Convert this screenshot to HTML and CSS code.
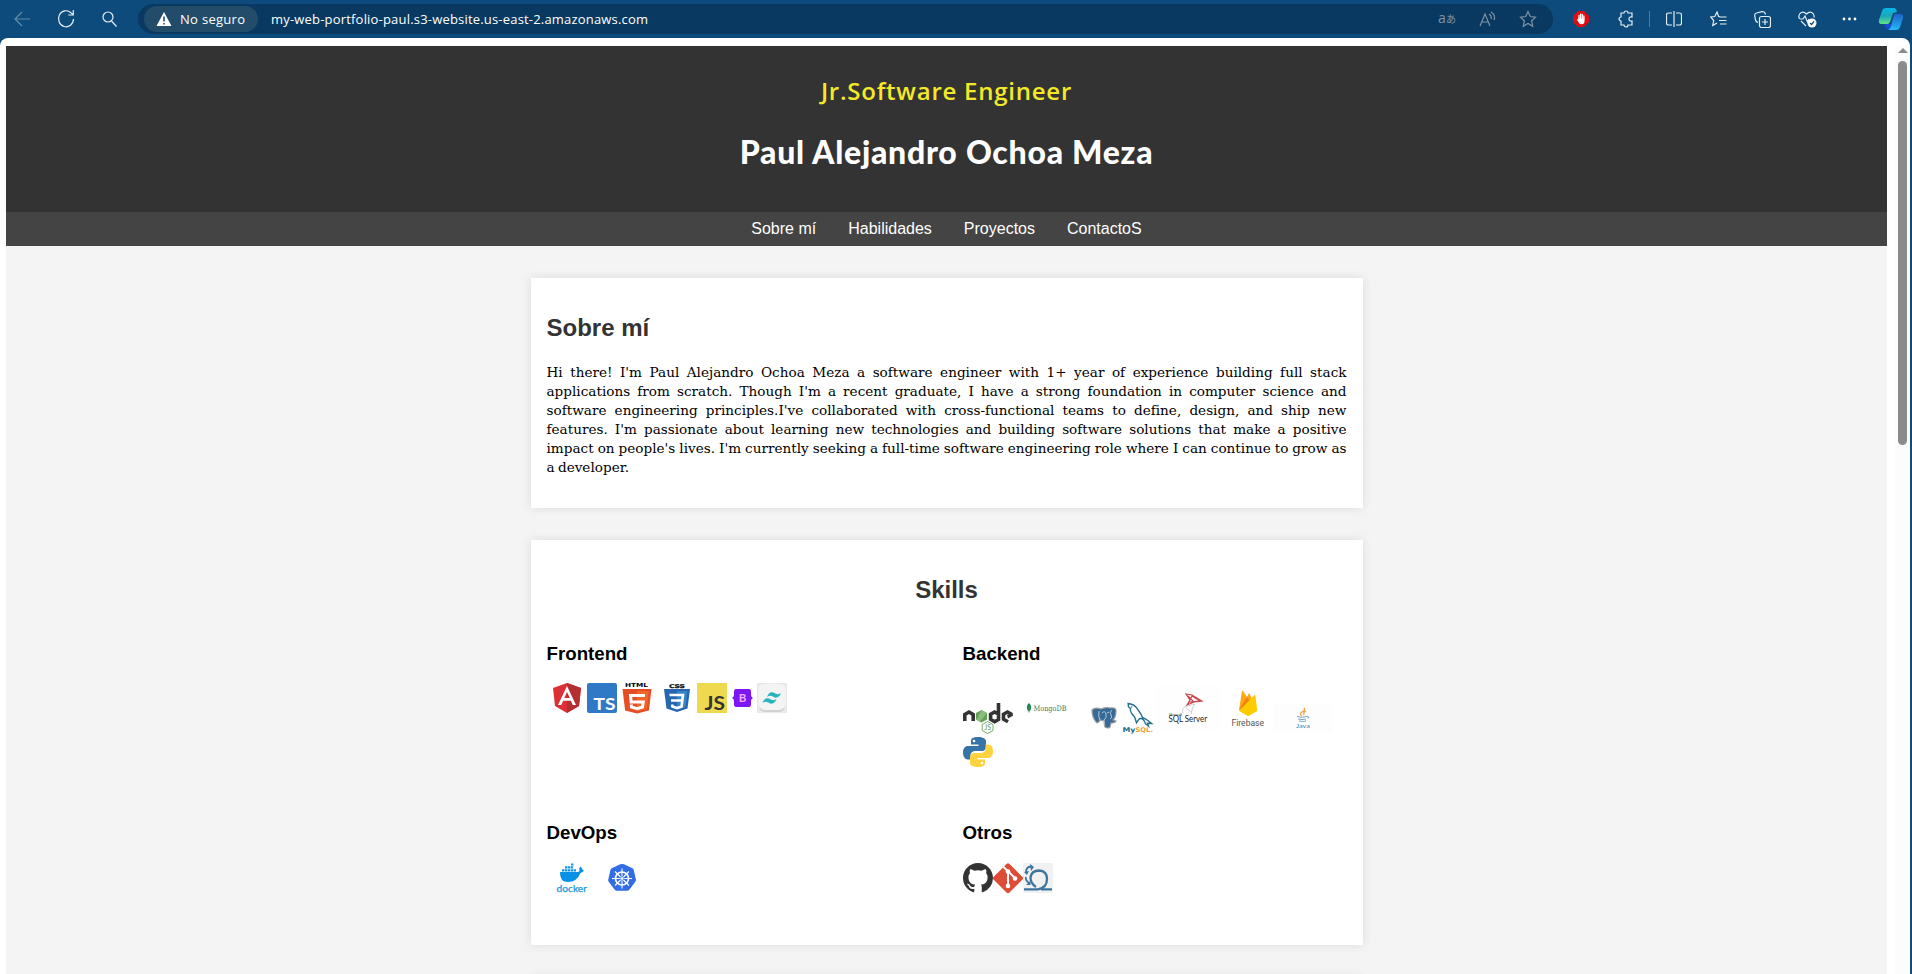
FILE: index.html
```html
<!DOCTYPE html>
<html lang="es">
<head>
<meta charset="utf-8">
<title>Paul Alejandro Ochoa Meza</title>
<link rel="stylesheet" href="styles.css">
</head>
<body>
<div class="toolbar">
  <div class="tools-left">
    <svg class="dim" width="18" height="18" viewBox="0 0 18 18"><path d="M17 9H2M9 2L2 9l7 7"/></svg>
    <svg width="18" height="20" viewBox="0 0 18 20"><path d="M16.500 10a7.500 8 0 1 1-2.600-6.300L16 5.500M16.300 1v5h-5"/></svg>
    <svg width="16" height="18" viewBox="0 0 16 18"><circle cx="7" cy="7" r="5"/><path d="M10.500 11l5 5.500"/></svg>
  </div>
  <div class="address">
    <div class="secure"><svg width="16" height="16" viewBox="0 0 16 16"><path class="solid" d="M8 1L15.500 15H.5z"/><path class="mark" d="M8 5.500v5M8 12v1.500"/></svg><span>No seguro</span></div>
    <span class="url">my-web-portfolio-paul.s3-website.us-east-2.amazonaws.com</span>
    <div class="addr-icons">
      <svg width="20" height="20" viewBox="0 0 20 20"><text x="1" y="14" font-size="14">a</text><text x="9" y="14" font-size="10" class="cjk">あ</text></svg>
      <svg width="18" height="16" viewBox="0 0 18 16"><path d="M1 15L6 3l5 12M3 11h6M10 3q3 2 2 5M12 1q5 3 3 8"/></svg>
      <svg width="18" height="18" viewBox="0 0 18 18"><path d="M9 1.500l2.300 5 5.200.6-3.900 3.600 1.100 5.500L9 13.500l-4.700 2.700 1.100-5.500L1.500 7.100l5.200-.6z"/></svg>
    </div>
  </div>
  <div class="tools-right">
    <svg width="16" height="16" viewBox="0 0 16 16"><path class="red" d="M5 0h6l5 5v6l-5 5H5l-5-5V5z"/><path class="hand" d="M6 8V4.500M7.600 8V3.200M9.300 8V3.500M10.900 8V5"/><path class="solid" d="M5.300 7.500h6.200v2.500q0 3.300-3 3.300-1.700 0-2.600-1.600L3.800 8.600q.7-.9 1.500 0z"/></svg>
    <svg class="puzzle" width="16" height="18" viewBox="0 0 16 18"><path d="M3 3h3a2 2 0 0 1 4 0h4v4q-3-.5-3 2t3 2v4h-4a2 2 0 0 1-4 0H3v-4a2 2 0 0 1 0-4z"/></svg>
    <i class="divider"></i>
    <svg class="split" width="16" height="16" viewBox="0 0 16 16"><path d="M8 0v16M6 2H2.500q-2 0-2 2v8q0 2 2 2H6M10 2h3.500q2 0 2 2v8q0 2-2 2H10"/></svg>
    <svg class="fav" width="17" height="16" viewBox="0 0 17 16"><path d="M10 6L8.500 5.300 7 1 4.800 5.500.7 6l3 3.500-1 5L7 12M10 6h6.500M9 9.500h7.500M10 13h6.500"/></svg>
    <svg class="coll" width="17" height="17" viewBox="0 0 17 17"><rect x="5.500" y="5.500" width="11" height="11" rx="2"/><path d="M11 8v6M8 11h6M4 11.500Q2 11 1.500 9L.7 4.500Q.5 2.500 2.500 2L8 .7q2-.4 3 1.300l.5 1.500"/></svg>
    <svg class="heart" width="19" height="17" viewBox="0 0 19 17"><path d="M1.500 8Q0 5 2 2.500 5-.5 8.500 3 12-.5 15 2.500q1.500 2 1 4M2 8h3l2-3 2.500 6L11 8M3 10l5 5"/><circle class="solid" cx="14" cy="12" r="4.500"/><path class="tick" d="M12 12l1.500 1.500 2.500-3"/></svg>
    <svg class="dots" width="15" height="4" viewBox="0 0 15 4"><circle class="solid" cx="2" cy="2" r="1.400"/><circle class="solid" cx="7.500" cy="2" r="1.400"/><circle class="solid" cx="13" cy="2" r="1.400"/></svg>
    <svg class="copilot" width="24" height="22" viewBox="0 0 24 22"><defs><linearGradient id="ca" x2="0" y2="1"><stop stop-color="#0bb5e8"/><stop offset=".5" stop-color="#18a9b8"/><stop offset="1" stop-color="#62e38c"/></linearGradient><linearGradient id="cb" x2="0" y2="1"><stop stop-color="#1c62c8"/><stop offset="1" stop-color="#23baf8"/></linearGradient></defs><path fill="#174bd6" stroke="none" d="M5 16h7l-1 5q-4 1-5-3z"/><path fill="url(#ca)" stroke="none" d="M7 0h8q2 0 3 4l-4 1-3 9q-.8 2-3 2H2q-3-.5-2-4L3 3q1-3 4-3z"/><path fill="url(#cb)" stroke="none" d="M16 6h6q3 1 2 4l-3 9q-1 3-4 3H9q2-1 3-4l2.500-9Q15 6 16 6z"/></svg>
  </div>
</div>
<div class="window">
  <div class="page">
    <header class="hero"><h2 class="role"><span>Jr.Software Engineer</span></h2><h1 class="name"><span>Paul Alejandro Ochoa Meza</span></h1></header>
    <nav class="menu"><a>Sobre mí</a><a>Habilidades</a><a>Proyectos</a><a>ContactoS</a></nav>
    <main>
      <section class="card about">
        <h2>Sobre mí</h2>
        <div class="bio">
          <p>Hi there! I'm Paul Alejandro Ochoa Meza a software engineer with 1+ year of experience building full stack</p>
          <p>applications from scratch. Though I'm a recent graduate, I have a strong foundation in computer science and</p>
          <p>software engineering principles.I've collaborated with cross-functional teams to define, design, and ship new</p>
          <p>features. I'm passionate about learning new technologies and building software solutions that make a positive</p>
          <p>impact on people's lives. I'm currently seeking a full-time software engineering role where I can continue to grow as</p>
          <p class="last">a developer.</p>
        </div>
      </section>
      <section class="card skills">
        <h2>Skills</h2>
        <div class="grid">
          <div class="group">
            <h3>Frontend</h3>
            <svg class="logos" width="400" height="90" viewBox="547 683 400 90">
              <path fill="#dd2f36" d="M567 683l14 5-2 18-12 7-12-7-2-18z"/><path fill="#b52e31" d="M567 683l14 5-2 18-12 7z"/><path fill="#fff" fill-rule="evenodd" d="M567 686l9 19h-3.300l-1.800-4.300h-7.800l-1.800 4.300H558zm0 6l-2.800 6h5.600z"/>
              <rect x="587" y="683" width="30" height="30" rx="2" fill="#2f79c7"/><text x="593.500" y="710" font-size="17" class="b sans" fill="#fff" textLength="22" lengthAdjust="spacingAndGlyphs">TS</text>
              <text x="625" y="687" font-size="5.500" class="b wide" fill="#000" textLength="23" lengthAdjust="spacingAndGlyphs">HTML</text><path fill="#e44d26" d="M622.500 689h29l-2.600 21.500-11.900 3-11.900-3z"/><path fill="#f16529" d="M637 691h12l-2.200 18-9.800 2.500z"/><path d="M645 695.500h-14.500l.7 6.500h12l-.7 5-5.500 1.700-5.500-1.700-.3-2.500" fill="none" stroke="#fff" stroke-width="3"/>
              <text x="669" y="688" font-size="5.200" class="b wide" fill="#111" stroke="#111" stroke-width=".3" textLength="16" lengthAdjust="spacingAndGlyphs">CSS</text><path fill="#2466af" d="M664 689h26l-2.500 19.500-10.500 3.500-10.500-3.500z"/><path fill="#3485c7" d="M677 691h10.500l-2 16-8.500 3z"/><path d="M669.500 695h13.500l-.7 5.500H671m11.300 0l-.7 6-4.600 1.600-4.600-1.600-.3-2" fill="none" stroke="#fff" stroke-width="2.600"/>
              <rect x="697" y="683" width="30" height="30" fill="#efd94e"/><text x="704.500" y="710" font-size="18" class="b sans" fill="#333" textLength="20.500" lengthAdjust="spacingAndGlyphs">JS</text>
              <path fill="#7d16f5" d="M736 689h13q2 0 2 3v3q0 2 2 3-2 1-2 3v3q0 3-2 3h-13q-2 0-2-3v-3q0-2-2-3 2-1 2-3v-3q0-3 2-3z"/><text x="742.500" y="702" text-anchor="middle" font-size="11.500" class="sans b" fill="#eaf">B</text>
              <rect x="757" y="683" width="30" height="30" fill="#e9e9e9"/><rect x="758.500" y="684" width="27" height="26.500" rx="5" fill="#f4f4f4"/><path d="M759 706q1 6 7 6h12q6 0 7-6-2 4-7 4h-12q-5 0-7-4z" fill="#d2d2d2"/><path fill="#26b5bd" d="M767 697q2-6 6.500-4.500 4.500 3 7.500.5-2 5.500-6.500 4.500-4-3-7.500-.5zm-4.500 6q2-6 6.500-4.500 4.500 3 7.500.5-2 5.500-6.500 4.500-4-3-7.500-.5z"/>
            </svg>
          </div>
          <div class="group">
            <h3>Backend</h3>
            <svg class="logos" width="384" height="90" viewBox="963 683 384 90">
              <g fill="none" stroke="#333" stroke-width="3.600"><path d="M964.800 721v-6.500l4.200-2.500 4.200 2.500v6.500M998.500 703v11l-3.900-2-4 2.300v5l4 2.400 3.900-2.200V714M1011 716v-2l-3.500-2-4 2.300v5l4.500 2.500"/></g><path fill="#333" d="M1007 715l3-1 2.500 2-4.500 2.500z"/><path fill="#5fa155" d="M981.500 710l5.500 3v6.500l-5.500 3-5.500-3V713z"/><path fill="#8abc7d" d="M981.500 710l5.500 3-7 8.800-3.500-2z"/><path d="M987.600 721.500l5.400 3v6l-5.400 3-5.400-3v-6z" fill="none" stroke="#75ac64"/><text x="984.300" y="730" font-size="7" class="sans" fill="#68a052">JS</text>
              <path fill="#138750" d="M1029 703q4.500 4 0 9-4.500-5 0-9z"/><path d="M1029 706v7" stroke="#68a47f" stroke-width=".6"/><text x="1033.500" y="711.200" font-size="7.500" class="serif" fill="#377f5c" textLength="33" lengthAdjust="spacingAndGlyphs">MongoDB</text>
              <path fill="#376996" stroke="#999" stroke-width="1.200" d="M1092 710q3-3 9-1 5-2 9-1 6-1 6 3 0 6-3 9l3 1q-1 2-5 2l-1 4q-2 2-5 0l-1-6-4-1q-2 4-4 2-4-5-4-12z"/><path d="M1099 711q-1 6 1 9M1102 713q3-3 4 1t-2 6v5M1112 710q-3 2-1 5t-1 4M1107 713l2-1" stroke="#c4d5e1" stroke-width=".9" fill="none"/>
              <path d="M1127.500 703.500q7 0 11 7 3 4 4 7l4 2 5 4-4-.3 1 3-3-2.500q-2-6-6-5l-3 4-2-6q-5-5-4-8-3-2-2-5z" fill="none" stroke="#29718d" stroke-width="1.400"/><circle cx="1131.500" cy="707" r=".8" fill="#29718d"/><text x="1122.500" y="732" font-size="6.500" class="b wide" fill="#206b8b" textLength="13" lengthAdjust="spacingAndGlyphs">My</text><text x="1135.500" y="732" font-size="6.500" class="b wide" fill="#efa039" textLength="17.500" lengthAdjust="spacingAndGlyphs">SQL.</text>
              <rect x="1154" y="684" width="68" height="47" fill="#fefefe"/><path d="M1186 694l6 1 10 6-8 1-7 3 3-5zm2 2l5 5m-5 3l4-8 8 5-11 1" fill="none" stroke="#c9484f" stroke-width="1.200"/><path d="M1183 713q-2-6 5-7 5-2 7-2-3 3-4 10M1186 708l5 4" fill="none" stroke="#ccd0d3"/><text x="1169" y="715.500" font-size="4.200" class="sans" fill="#444" textLength="13" lengthAdjust="spacingAndGlyphs">Microsoft</text><text x="1168.500" y="722" font-size="9" class="sans" fill="#222" textLength="38.500" lengthAdjust="spacingAndGlyphs">SQL Server</text>
              <path fill="#ffa712" d="M1239 710l3-19q.5-.8 1 0l4 6 1.500-3.300q.7-.5 1.200 0l6.300 16z"/><path fill="#f57f17" d="M1239 710l8-13 3 5z"/><path fill="#fc0" d="M1239 711l15-15.500q1-.8 1.500 0l1.700 15.500-8 4.800q-1 .3-2 0z"/><text x="1231.500" y="726" font-size="8.500" class="roboto" fill="#555" textLength="32.500" lengthAdjust="spacingAndGlyphs">Firebase</text>
              <rect x="1273" y="703" width="59" height="30" fill="#fdfdfd"/><path d="M1304 708q2 2-2 4-3 2 0 4M1306 711q-3 1-2 4" fill="none" stroke="#eda144" stroke-width="1.300"/><path d="M1297 716.500q4 1.500 10 0 3 0 1 2M1298 719q4 1 8 0M1299 721q4 1 7 0" fill="none" stroke="#7aa4c1"/><text x="1296" y="727.500" font-size="6.500" class="sans" fill="#487fa6" textLength="14" lengthAdjust="spacingAndGlyphs">Java</text>
              <path fill="#3673a6" d="M978 737c-7 0-7 2.500-7 4.500v3h7.500v1.500H968c-3 0-5 2.500-5 6.500s2 7 4.500 7h3v-4c0-3 2-4.500 5-4.500h6.500c2.500 0 4-2 4-4v-5.500c0-3-3-4.500-8-4.500z"/><path fill="#ffd23f" d="M978 767c7 0 7-2.500 7-4.500v-3h-7.500V758H988c3 0 5-2.500 5-6.500s-2-7-4.500-7h-3v4c0 3-2 4.500-5 4.500H974c-2.500 0-4 2-4 4v5.500c0 3 3 4.500 8 4.500z"/><circle cx="974" cy="741" r="1.300" fill="#fff"/><circle cx="982" cy="763" r="1.300" fill="#fff"/>
            </svg>
          </div>
          <div class="group">
            <h3>DevOps</h3>
            <svg class="logos short" width="400" height="30" viewBox="547 863 400 30">
              <path fill="#0992e5" d="M560 872h17q2 0 2.500-1-1-3 .8-4.500 1.700 1 2 3 2 0 1.300 1.500-.8 1.500-3 1.800Q577 882 568 882q-8.500 0-8-10z"/><path d="M562 870.300h14M565 867.300h8.500M571 864.500h2.500" stroke="#1597df" stroke-width="2.200" stroke-dasharray="2.400 .5"/><text x="556.500" y="892" font-size="9.500" class="lato" fill="#2297dc" stroke="#2297dc" stroke-width=".25" textLength="30.500" lengthAdjust="spacingAndGlyphs">docker</text>
              <path fill="#326de6" d="M622 864q1-.3 2 .3l8.500 4q1 .5 1.200 1.500l2.300 10q0 1-.7 2l-6 8q-.8 1-2 1h-10.600q-1.200 0-2-1l-6-8q-.7-1-.5-2l2.300-10q.2-1 1.200-1.500l8.500-4q.8-.3 1.800-.3z"/><circle cx="622" cy="878.500" r="6.500" fill="none" stroke="#fff" stroke-width="1.700"/><path d="M622 868.500v20M612 878.500h20M615 871.500l14 14M629 871.500l-14 14" stroke="#fff" stroke-width="1.100"/><circle cx="622" cy="878.500" r="1.800" fill="#fff" stroke="#326de6" stroke-width=".7"/>
            </svg>
          </div>
          <div class="group">
            <h3>Otros</h3>
            <svg class="logos short" width="384" height="30" viewBox="963 863 384 30">
              <g transform="translate(963 863) scale(1.875)"><path fill="#333" d="M8 0C3.580 0 0 3.580 0 8c0 3.540 2.290 6.530 5.470 7.590.4.070.55-.17.55-.38 0-.19-.01-.82-.01-1.490-2.010.37-2.530-.49-2.690-.94-.09-.23-.48-.94-.82-1.130-.28-.15-.68-.52-.01-.53.63-.01 1.080.58 1.230.82.72 1.210 1.870.87 2.330.66.07-.52.28-.87.51-1.070-1.780-.2-3.640-.89-3.640-3.950 0-.87.31-1.590.82-2.150-.08-.2-.36-1.020.08-2.120 0 0 .67-.21 2.200.82.640-.18 1.320-.27 2-.27s1.360.09 2 .27c1.530-1.040 2.200-.82 2.200-.82.44 1.100.16 1.920.08 2.120.51.56.82 1.270.82 2.150 0 3.070-1.870 3.750-3.650 3.950.29.25.54.73.54 1.480 0 1.070-.01 1.930-.01 2.200 0 .21.15.46.55.38A8.010 8.010 0 0 0 16 8c0-4.420-3.580-8-8-8z"/></g>
              <path fill="#de4c36" d="M1006.500 864q1.500-1.500 3 0l13 13q1.200 1.200 0 2.400l-13 13q-1.500 1.300-3 0l-13-13q-1.200-1.200 0-2.400z"/><path d="M1003 866.500l12 11.500M1008 871v14" stroke="#fff" stroke-width="2"/><circle cx="1008" cy="871.500" r="2.300" fill="#fff"/><circle cx="1015" cy="878.500" r="2.300" fill="#fff"/><circle cx="1008" cy="886" r="2.300" fill="#fff"/>
              <rect x="1023" y="863" width="30" height="30" fill="#f1f1f1"/><path d="M1024 889.300h14q9-1.500 9-10.300 0-8-8-8.500-7.500 0-8.500 7 0 6 5.500 9.500M1041 889.300h11" fill="none" stroke="#3c769f" stroke-width="2.300"/><path d="M1029 883q-4-3-3-6M1026 872q0-5 5-5.500" fill="none" stroke="#3c769f" stroke-width="1.800"/><path fill="#3c769f" d="M1030 864l4 3-3 4zM1024 872l5-1-2 4zM1026 885l4.500-4v4z"/>
            </svg>
          </div>
        </div>
      </section>
      <section class="card next"></section>
    </main>
  </div>
  <div class="scroll"><i class="up"></i><i class="thumb"></i></div>
</div>
</body>
</html>
```
FILE: styles.css
```css
* { box-sizing: border-box; }
body { margin: 0; height: 974px; overflow: hidden; background: #0c4b7b; font-family: "Liberation Sans", Arial, sans-serif; display: flex; flex-direction: column; }
h1, h2, h3, p { margin: 0; }
.toolbar { height: 38px; flex: none; display: flex; align-items: center; padding: 0 5px 0 13px; color: #fff; font: 13px/18px "Open Sans", "Noto Sans", sans-serif; }
.toolbar svg { fill: none; stroke: #e6eef4; stroke-width: 1.2; flex: none; }
.toolbar .dim { opacity: .4; }
.toolbar .solid { fill: #fff; stroke: none; }
.toolbar .hand { stroke: #fff; stroke-width: 1.3; stroke-linecap: round; }
.toolbar .mark { stroke: #234c6b; stroke-width: 1.6; }
.toolbar .red { fill: #e10c12; stroke: none; }
.toolbar .tick { stroke: #0c4b7b; }
.tools-left { width: 125px; display: flex; align-items: center; gap: 26px; }
.address { width: 1415px; height: 30px; border-radius: 15px; background: #093960; display: flex; align-items: center; padding: 0 16px 0 6px; }
.secure { width: 114px; height: 26px; border-radius: 13px; background: #234c6b; display: flex; align-items: center; gap: 8px; padding-left: 12px; letter-spacing: .3px; white-space: nowrap; }
.url { margin-left: 13px; letter-spacing: .19px; white-space: nowrap; }
.addr-icons { margin-left: auto; display: flex; align-items: center; gap: 22px; }
.addr-icons svg { stroke: #7f93a3; }
.addr-icons text { fill: #7f93a3; stroke: none; }
.cjk { font-family: "Noto Sans CJK JP", sans-serif; }
.tools-right { display: flex; align-items: center; flex: 1; padding-left: 20px; }
.puzzle { margin-left: 29px; }
.divider { width: 1px; height: 16px; background: #4c7b9f; margin-left: 15px; }
.split { margin-left: 16px; }
.fav { margin-left: 28px; }
.coll { margin-left: 27px; }
.heart { margin-left: 27px; }
.dots { margin-left: 25px; }
.copilot { margin-left: auto; margin-right: 4px; }
.window { flex: 1; margin-right: 2px; background: #fff; border-radius: 8px 8px 0 0; display: flex; overflow: hidden; padding: 8px 0 0 6px; }
.page { width: 1881px; height: 928px; overflow: hidden; background: #f4f4f4; flex: none; }
.hero { height: 166px; background: #333; text-align: center; padding-top: 30px; }
.role { font: 600 24px/30px "Open Sans", sans-serif; color: #f3e927; letter-spacing: .76px; }
.name { font: 900 32px/38px "Lato Black", Lato, sans-serif; color: #fff; margin-top: 27px; letter-spacing: .72px; }
.menu { height: 34px; background: #444; color: #fff; display: flex; justify-content: center; gap: 32px; font-size: 16px; line-height: 34px; }
.card { width: 832px; margin: 32px auto 0; padding: 36px 16px 0; background: #fff; box-shadow: 0 0 10px rgba(0,0,0,.1); }
.card h2 { font-size: 24px; line-height: 27px; color: #333; }
.about { height: 230px; }
.bio { margin-top: 22px; font: 13.6px/19px "DejaVu Serif", serif; word-spacing: -1px; color: #000; }
.bio p { text-align: justify; text-align-last: justify; white-space: nowrap; }
.bio .last { text-align-last: left; }
.skills { height: 405px; }
.skills h2 { text-align: center; }
.grid { display: grid; grid-template-columns: 400px 384px; column-gap: 16px; margin-top: 40px; }
.group h3 { font-size: 18.72px; line-height: 21px; color: #000; }
.logos { display: block; margin-top: 19px; margin-bottom: 49px; }
.short { margin-top: 20px; margin-bottom: 0; }
.b { font-weight: 700; }
.sans { font-family: Lato, sans-serif; }
.wide { font-family: "DejaVu Sans", sans-serif; }
.serif { font-family: "DejaVu Serif", serif; }
.roboto { font-family: Roboto, sans-serif; }
.lato { font-family: Lato, sans-serif; }
.next { height: 200px; }
.scroll { width: 15px; margin: 0 0 0 auto; background: #fcfcfc; display: flex; flex-direction: column; align-items: center; }
.up { border: 5px solid transparent; border-top: 0; border-bottom: 5px solid #8b8b8b; margin-top: 2px; }
.thumb { width: 9px; height: 384px; border-radius: 5px; background: #8b8b8b; margin-top: 8px; }
```
